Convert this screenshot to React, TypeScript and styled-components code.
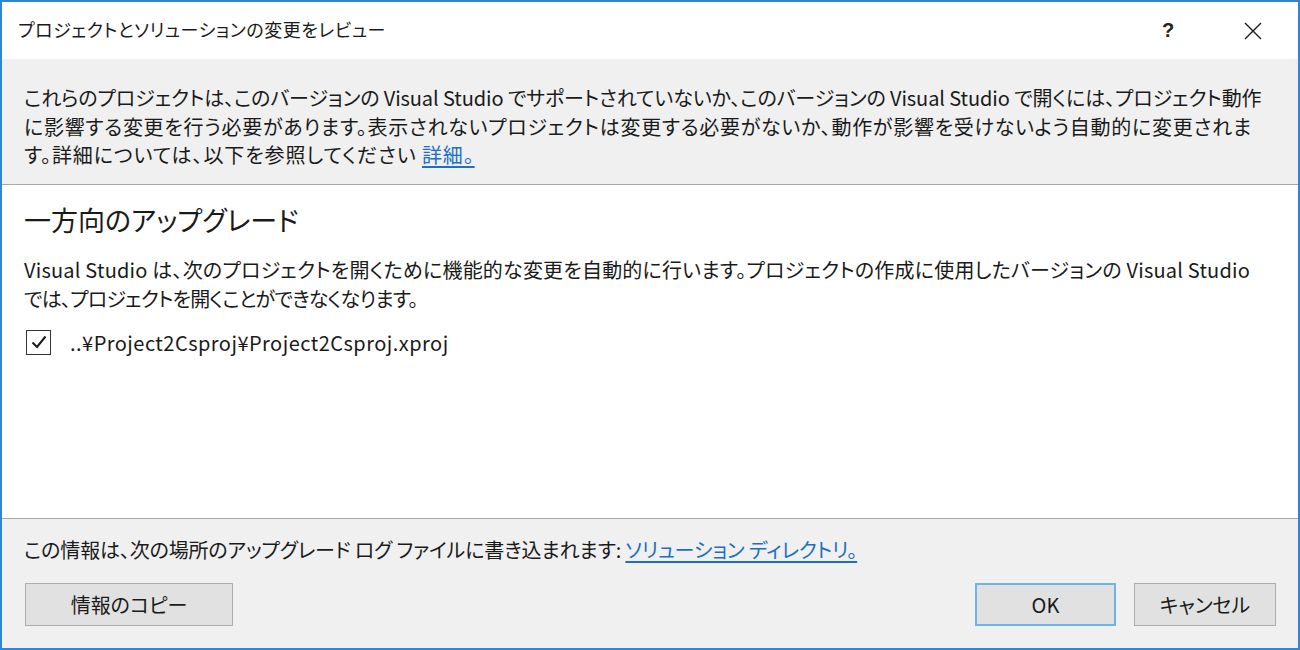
import React from "react";
import styled, { createGlobalStyle } from "styled-components";

const Global = createGlobalStyle`
  html, body { margin: 0; padding: 0; background: #ffffff; }
  body {
    font-family: "Noto Sans CJK JP", "Noto Sans", sans-serif;
    color: #1a1a1a;
    font-feature-settings: "palt" 1;
  }
  * { box-sizing: border-box; }
`;

const Window = styled.div`
  width: 1300px;
  height: 650px;
  border: 2px solid #2f86d6;
  display: flex;
  flex-direction: column;
  background: #ffffff;
  overflow: hidden;
`;

const TitleBar = styled.div`
  height: 57px;
  flex: none;
  display: flex;
  align-items: center;
  padding-left: 16px;
  background: #ffffff;
`;

const Title = styled.div`
  flex: 1;
  font-size: 18px;
  letter-spacing: 0.55px;
  color: #1a1a1a;
  white-space: nowrap;
  margin-top: -3px;
`;

const TitleButton = styled.div<{ $w: number }>`
  width: ${(p) => p.$w}px;
  height: 57px;
  display: flex;
  align-items: center;
  justify-content: center;
  font-family: "Liberation Sans", sans-serif;
  font-size: 20px;
  font-weight: bold;
  color: #222;
`;

const InfoBand = styled.div`
  flex: none;
  height: 126px;
  background: #f0f0f0;
  border-bottom: 1px solid #a8a8a8;
  padding: 25px 0 0 22px;
`;

const Line = styled.div<{ $ls?: number }>`
  font-size: 20px;
  line-height: 28.5px;
  white-space: nowrap;
  color: #1a1a1a;
  letter-spacing: ${(p) => p.$ls ?? 0}px;
`;

const Link = styled.a`
  color: #1c6fc2;
  text-decoration: underline;
  text-underline-offset: 3px;
  cursor: pointer;
`;

const Content = styled.div`
  flex: 1;
  background: #ffffff;
  padding: 18px 0 0 22px;
  display: flex;
  flex-direction: column;
`;

const Heading = styled.div`
  font-size: 27px;
  line-height: 34px;
  color: #1a1a1a;
  white-space: nowrap;
`;

const Paragraph = styled.div`
  margin-top: 19px;
`;

const CheckRow = styled.label`
  margin-top: 16px;
  display: flex;
  align-items: center;
  gap: 19px;
  height: 26px;
  padding-left: 2px;
`;

const Box = styled.span`
  width: 25px;
  height: 25px;
  border: 1px solid #333333;
  background: #ffffff;
  display: flex;
  align-items: center;
  justify-content: center;
`;

const PathText = styled.span`
  font-size: 20px;
  letter-spacing: 0.47px;
  color: #1a1a1a;
  white-space: nowrap;
`;

const Footer = styled.div`
  flex: none;
  height: 130px;
  background: #f0f0f0;
  border-top: 1px solid #a8a8a8;
  padding: 17px 22px 0 22px;
  display: flex;
  flex-direction: column;
`;

const ButtonRow = styled.div`
  margin-top: 18px;
  display: flex;
  align-items: center;
  padding-left: 1px;
`;

const Spacer = styled.div`
  flex: 1;
`;

const Button = styled.button<{ $w: number; $primary?: boolean }>`
  width: ${(p) => p.$w}px;
  height: 43px;
  margin-left: ${(p) => (p.$primary ? 0 : 18)}px;
  background: #e1e1e1;
  border: ${(p) => (p.$primary ? "2px solid #6fb3ec" : "1px solid #adadad")};
  font-family: "Noto Sans CJK JP", "Noto Sans", sans-serif;
  font-feature-settings: "palt" 1;
  font-size: 20px;
  color: #1a1a1a;
  padding: 0;
  display: flex;
  align-items: center;
  justify-content: center;
`;

const FirstButton = styled(Button)`
  margin-left: 0;
`;

export default function App() {
  return (
    <>
      <Global />
      <Window>
        <TitleBar>
          <Title>プロジェクトとソリューションの変更をレビュー</Title>
          <TitleButton $w={80}>?</TitleButton>
          <TitleButton $w={90}>
            <svg width="20" height="20" viewBox="0 0 20 20">
              <path d="M2 2 L18 18 M18 2 L2 18" stroke="#1a1a1a" strokeWidth="1.4" fill="none" />
            </svg>
          </TitleButton>
        </TitleBar>
        <InfoBand>
          <Line $ls={-0.1}>
            これらのプロジェクトは、このバージョンの Visual Studio でサポートされていないか、このバージョンの Visual Studio で開くには、プロジェクト動作
          </Line>
          <Line $ls={0.72}>
            に影響する変更を行う必要があります。表示されないプロジェクトは変更する必要がないか、動作が影響を受けないよう自動的に変更されま
          </Line>
          <Line $ls={0.9}>
            す。詳細については、以下を参照してください <Link>詳細。</Link>
          </Line>
        </InfoBand>
        <Content>
          <Heading>一方向のアップグレード</Heading>
          <Paragraph>
            <Line $ls={0.2}>
              Visual Studio は、次のプロジェクトを開くために機能的な変更を自動的に行います。プロジェクトの作成に使用したバージョンの Visual Studio
            </Line>
            <Line $ls={-0.8}>では、プロジェクトを開くことができなくなります。</Line>
          </Paragraph>
          <CheckRow>
            <Box>
              <svg width="18" height="18" viewBox="0 0 18 18">
                <path d="M2.5 9.5 L7 14 L15.5 3.5" stroke="#1a1a1a" strokeWidth="2" fill="none" />
              </svg>
            </Box>
            <PathText>..¥Project2Csproj¥Project2Csproj.xproj</PathText>
          </CheckRow>
        </Content>
        <Footer>
          <Line $ls={-0.15}>
            この情報は、次の場所のアップグレード ログ ファイルに書き込まれます: <Link>ソリューション ディレクトリ。</Link>
          </Line>
          <ButtonRow>
            <FirstButton $w={208}>情報のコピー</FirstButton>
            <Spacer />
            <Button $w={141} $primary>OK</Button>
            <Button $w={142}>キャンセル</Button>
          </ButtonRow>
        </Footer>
      </Window>
    </>
  );
}
